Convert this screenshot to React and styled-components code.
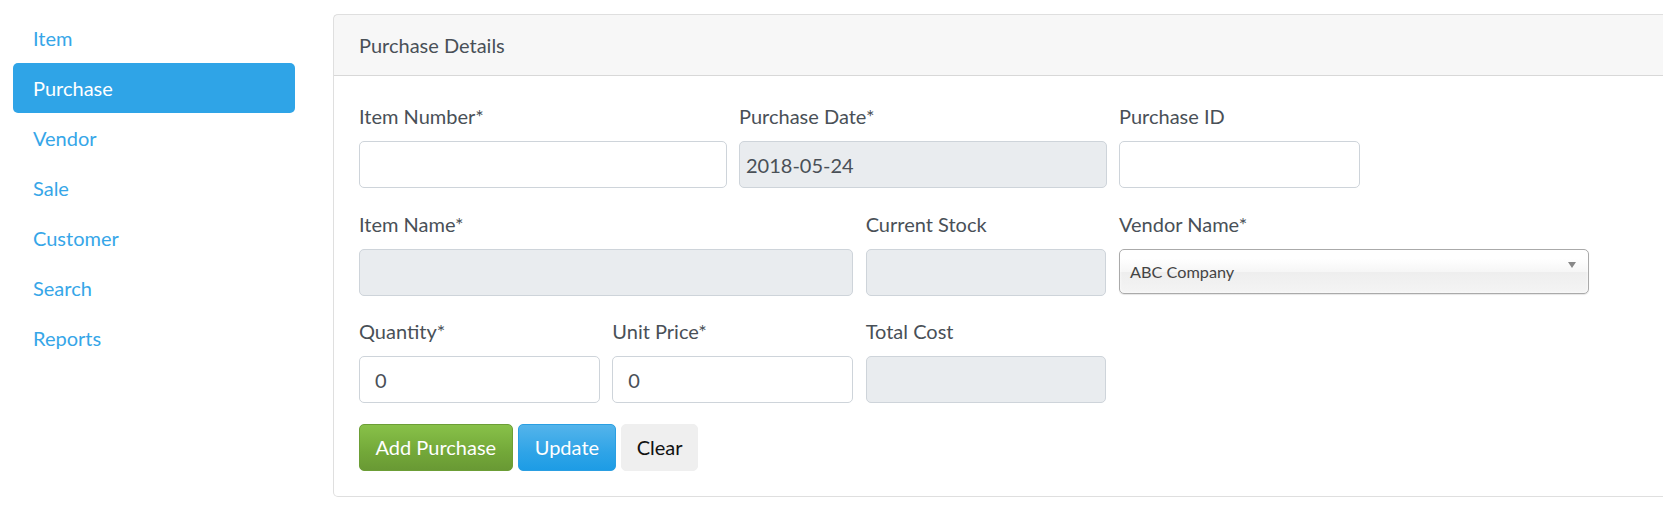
import React from "react";
import styled, { createGlobalStyle } from "styled-components";

const Global = createGlobalStyle`
  html, body {
    margin: 0;
    padding: 0;
    background: #fff;
    overflow: hidden;
  }
  body {
    font-family: Lato, "Open Sans", sans-serif;
    font-size: 20px;
    line-height: 30px;
    color: #495057;
  }
  * { box-sizing: border-box; }
`;

const Page = styled.div`
  display: flex;
  align-items: flex-start;
  gap: 38px;
  padding: 13px 0 0 13px;
  width: 1663px;
  height: 525px;
  overflow: hidden;
`;

const Sidebar = styled.nav`
  display: flex;
  flex-direction: column;
  width: 282px;
  flex-shrink: 0;
`;

const NavLink = styled.a`
  display: block;
  height: 50px;
  padding: 10px 20px;
  border-radius: 5px;
  font-size: 20px;
  line-height: 30px;
  text-decoration: none;
  color: ${(p) => (p.$active ? "#fff" : "#36a6e8")};
  background: ${(p) => (p.$active ? "#2fa4e7" : "transparent")};
`;

const Card = styled.section`
  width: 1560px;
  flex-shrink: 0;
  margin-top: 0.5px;
  border: 1px solid rgba(0, 0, 0, 0.125);
  border-radius: 5px;
  background: #fff;
`;

const CardHeader = styled.header`
  padding: 15px 25px 15.5px;
  background: rgba(0, 0, 0, 0.03);
  border-bottom: 1px solid rgba(0, 0, 0, 0.125);
  font-size: 20px;
  line-height: 30px;
  color: #495057;
`;

const CardBody = styled.div`
  padding: 25px;
`;

const FormRow = styled.div`
  display: flex;
  gap: 12.5px;
  margin-bottom: 20.5px;
`;

const Group = styled.div`
  display: flex;
  flex-direction: column;
  width: ${(p) => p.$span * 126.667 - 12.5}px;
`;

const Label = styled.label`
  display: block;
  font-size: 20px;
  line-height: 30px;
  margin-bottom: 10px;
  color: #495057;
`;

const Input = styled.input`
  display: block;
  width: 100%;
  height: 47px;
  padding: 7.5px ${(p) => p.$padLeft ?? 15}px;
  font-family: inherit;
  font-size: 20px;
  line-height: 30px;
  color: #495057;
  background: ${(p) => (p.disabled ? "#e9ecef" : "#fff")};
  border: 1px solid #ced4da;
  border-radius: 5px;
  outline: none;
`;

const ChosenSelect = styled.div`
  display: flex;
  justify-content: space-between;
  width: 470px;
  height: 45px;
  padding: 0 12px 0 10px;
  border: 1px solid #aaa;
  border-radius: 5px;
  background: linear-gradient(#fff 20%, #f6f6f6 50%, #eee 52%, #f4f4f4 100%);
  box-shadow: inset 0 0 3px #fff, 0 1px 1px rgba(0, 0, 0, 0.1);
  color: #444;
  font-size: 16.25px;
  line-height: 43px;
`;

const Arrow = styled.svg`
  align-self: flex-start;
  margin-top: 12px;
  flex-shrink: 0;
`;

const ButtonBar = styled.div`
  display: flex;
  gap: 5.6px;
`;

const variants = {
  success: `
    color: #fff;
    background-image: linear-gradient(#88c149, #73a839 60%, #699934);
    border-color: #6c9e36;
  `,
  primary: `
    color: #fff;
    background-image: linear-gradient(#54b4eb, #2fa4e7 60%, #1d9ce5);
    border-color: #2a9fe2;
  `,
  light: `
    color: #111;
    background: #efefef;
    border-color: #efefef;
  `,
};

const Button = styled.button`
  height: 47px;
  padding: 7.5px ${(p) => p.$padX ?? 15.5}px;
  font-family: inherit;
  font-size: 20px;
  line-height: 30px;
  border: 1px solid transparent;
  border-radius: 5px;
  cursor: pointer;
  text-shadow: 0 1px 0 rgba(0, 0, 0, 0.05);
  ${(p) => variants[p.$variant]}
`;

const navItems = ["Item", "Purchase", "Vendor", "Sale", "Customer", "Search", "Reports"];

export default function App() {
  return (
    <>
      <Global />
      <Page>
        <Sidebar>
          {navItems.map((n) => (
            <NavLink key={n} href="#" $active={n === "Purchase"}>
              {n}
            </NavLink>
          ))}
        </Sidebar>
        <Card>
          <CardHeader>Purchase Details</CardHeader>
          <CardBody>
            <FormRow>
              <Group $span={3}>
                <Label>Item Number*</Label>
                <Input type="text" />
              </Group>
              <Group $span={3}>
                <Label>Purchase Date*</Label>
                <Input type="text" disabled defaultValue="2018-05-24" $padLeft={6} />
              </Group>
              <Group $span={2}>
                <Label>Purchase ID</Label>
                <Input type="text" />
              </Group>
            </FormRow>
            <FormRow>
              <Group $span={4}>
                <Label>Item Name*</Label>
                <Input type="text" disabled />
              </Group>
              <Group $span={2}>
                <Label>Current Stock</Label>
                <Input type="text" disabled />
              </Group>
              <Group $span={4}>
                <Label>Vendor Name*</Label>
                <ChosenSelect>
                  <span>ABC Company</span>
                  <Arrow width="8" height="6" viewBox="0 0 8 6">
                    <path d="M0 0 L8 0 L4 6 Z" fill="#888" />
                  </Arrow>
                </ChosenSelect>
              </Group>
            </FormRow>
            <FormRow>
              <Group $span={2}>
                <Label>Quantity*</Label>
                <Input type="text" defaultValue="0" />
              </Group>
              <Group $span={2}>
                <Label>Unit Price*</Label>
                <Input type="text" defaultValue="0" />
              </Group>
              <Group $span={2}>
                <Label>Total Cost</Label>
                <Input type="text" disabled />
              </Group>
            </FormRow>
            <ButtonBar>
              <Button $variant="success">Add Purchase</Button>
              <Button $variant="primary">Update</Button>
              <Button $variant="light" $padX={14.5}>Clear</Button>
            </ButtonBar>
          </CardBody>
        </Card>
      </Page>
    </>
  );
}
